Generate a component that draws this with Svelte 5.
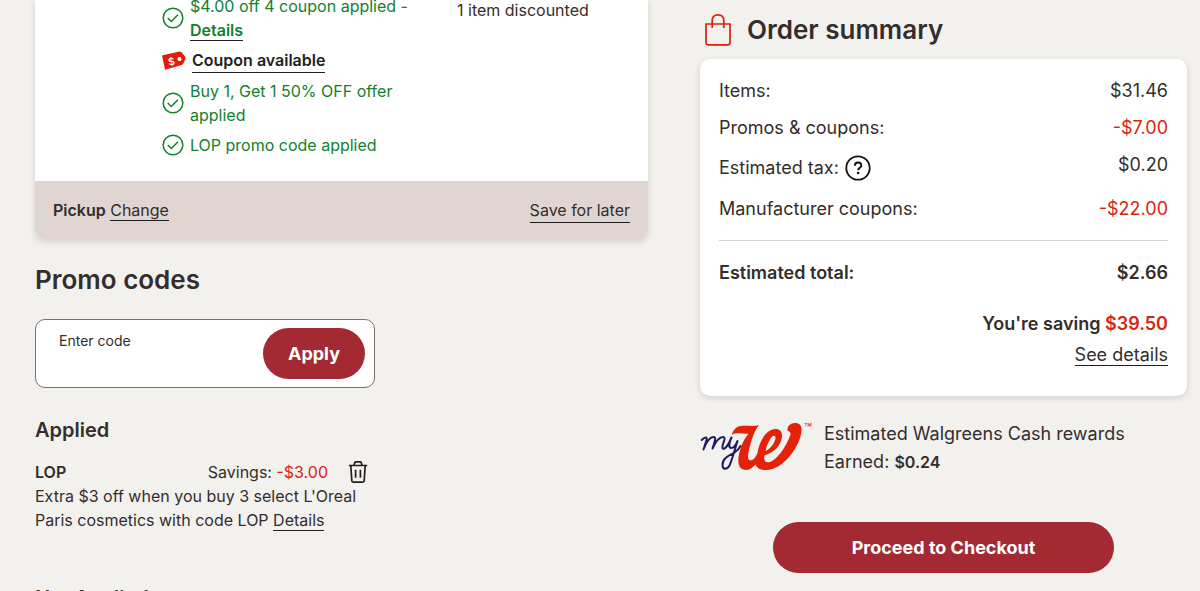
<script>
  let code = $state('');

  const offers = [
    { text: '$4.00 off 4 coupon applied -', link: 'Details' },
    { coupon: 'Coupon available' },
    { text: 'Buy 1, Get 1 50% OFF offer applied' },
    { text: 'LOP promo code applied' },
  ];

  const lines = [
    { label: 'Items:', amount: '$31.46' },
    { label: 'Promos & coupons:', amount: '-$7.00', saving: true },
    { label: 'Estimated tax:', amount: '$0.20', help: true },
    { label: 'Manufacturer coupons:', amount: '-$22.00', saving: true },
  ];
</script>

<main>
  <div class="cart">
    <section class="item">
      <div class="item-body">
        <ul class="offers">
          {#each offers as offer}
            {#if offer.coupon}
              <li class="coupon">
                <svg width="24" height="20" viewBox="0 0 24 20" aria-hidden="true">
                  <path d="M.6 4.2 17.6.4q1 0 1.7.7l3.8 4.5q.7 1 .3 2.2l-2.2 5q-.5 1-1.5 1.3L4 18.6q-1 .2-1.2-.8L.2 5.2q0-.8.4-1Z" fill="#df1f0c" />
                  <circle cx="17.5" cy="8" r="2" fill="#fff" />
                  <text x="6" y="14" transform="rotate(-12 10 10)" font-size="10" font-weight="600" fill="#fff">$</text>
                </svg>
                <a class="strong" href="#coupon">{offer.coupon}</a>
              </li>
            {:else}
              <li>
                <svg width="22" height="22" viewBox="0 0 22 22" fill="none" stroke="#12802f" stroke-width="1.5" aria-hidden="true">
                  <circle cx="11" cy="11" r="9.8" />
                  <path d="m5.8 11 3.5 3.5L16 7.8" />
                </svg>
                <span>
                  {offer.text}
                  {#if offer.link}<a class="strong" href="#offer">{offer.link}</a>{/if}
                </span>
              </li>
            {/if}
          {/each}
        </ul>
        <p class="discounted">1 item discounted</p>
      </div>
      <footer class="item-footer">
        <span><b>Pickup</b> <a href="#pickup">Change</a></span>
        <a href="#save">Save for later</a>
      </footer>
    </section>

    <section class="promo">
      <h2>Promo codes</h2>
      <form class="code-box" onsubmit={(e) => e.preventDefault()}>
        <div class="field">
          <label for="code">Enter code</label>
          <input id="code" type="text" bind:value={code} />
        </div>
        <button class="primary apply">Apply</button>
      </form>

      <h3>Applied</h3>
      <div class="applied">
        <div class="applied-head">
          <b>LOP</b>
          <span class="savings">Savings: <span class="red">-$3.00</span></span>
          <button class="icon" aria-label="Remove LOP">
            <svg width="20" height="22" viewBox="0 0 20 22" fill="none" stroke="#231f20" stroke-width="1.7" stroke-linejoin="round" aria-hidden="true">
              <path d="M.8 4.5h18.4M6 4.3l.8-2.8q.2-.6.8-.6h4.8q.6 0 .8.6l.8 2.8M2.8 4.8l1 15q.1 1.3 1.4 1.3h9.6q1.3 0 1.4-1.3l1-15M7.6 8.8v8M12.4 8.8v8" />
            </svg>
          </button>
        </div>
        <p>Extra $3 off when you buy 3 select L'Oreal Paris cosmetics with code LOP <a href="#lop">Details</a></p>
      </div>

      <h3>Not Applied</h3>
    </section>
  </div>

  <aside>
    <h2 class="summary-title">
      <svg width="26" height="32" viewBox="0 0 26 32" fill="none" stroke="#df1f0c" stroke-width="1.7" aria-hidden="true">
        <path d="M1 10h24v18.5q0 2.3-2.3 2.3H3.3Q1 30.8 1 28.5Z" />
        <path d="M7.2 14V6.8q0-5.9 5.8-5.9t5.8 5.9V14" />
      </svg>
      Order summary
    </h2>
    <div class="summary">
      <dl>
        {#each lines as line}
          <div class="line" class:tax={line.help}>
            <dt>
              {line.label}
              {#if line.help}
                <button class="icon" aria-label="About estimated tax">
                  <svg width="26" height="26" viewBox="0 0 26 26" fill="none" stroke="#111" aria-hidden="true">
                    <circle cx="13" cy="13" r="11.7" stroke-width="1.8" />
                    <path d="M9.9 10.7q0-3.2 3.2-3.2t3.2 2.9q0 1.5-1.6 2.5-1.5.9-1.5 2.3" stroke-width="1.9" />
                    <circle cx="13.1" cy="18" r="1.3" fill="#111" stroke="none" />
                  </svg>
                </button>
              {/if}
            </dt>
            <dd class:red={line.saving}>{line.amount}</dd>
          </div>
        {/each}
        <div class="line total">
          <dt>Estimated total:</dt>
          <dd>$2.66</dd>
        </div>
      </dl>
      <p class="saving">You're saving <span class="red">$39.50</span></p>
      <p class="see"><a href="#details">See details</a></p>
    </div>

    <div class="rewards">
      <svg width="112" height="50" viewBox="0 0 112 50" fill="none" role="img" aria-label="myW">
        <path d="M1.7 19C5 15.500 7.500 15.500 6.500 19L3.500 28.500C6 22 10 16 13.500 16 16.500 16 15 20 12.500 27.500 15.500 21 19.500 16 23 16 26 16 24 20 23 23 22 26 22 28.500 24.500 27.500 27 26.500 30 20 31.500 16.500 29 22 28 27 31.500 27 35 27 36 23 37.500 20 34 31 32 39 29.500 44.500 27 49 22.500 49 22.500 44 22.500 37 29 34.500 34 32 37 30 39 28 40.500 25" stroke="#1d1b60" stroke-width="2" stroke-linecap="round" stroke-linejoin="round" />
        <path fill-rule="evenodd" d="M31.700 13.700C34 7.500 37 4.700 43 4.700 49 4.700 54 5.500 59 4.200 54 10 51 20 49 29 47.500 36 47.500 39.500 51 39.300 54 39 56 35.500 57.500 32 59 21 66 8 75.500 8 80 8 82.500 11 82 16 81 25 73 32 64.500 34.500 63.500 39 65 41.800 68.500 41.300 77 40 86.500 25 90.500 13.500 91 11.500 89.500 10.500 87.500 9.500 87 5.500 90 2 95 2 100 2 102 5 101.500 10 100.500 24 84 49 66 49 60.500 49 57 47.500 55.500 43.500 52 47.500 49 49 46 49 40 49 37.500 44 38.500 36 40 27 43.500 18.500 48.500 12.800 42 12.800 36 11 31.700 13.700ZM65.500 30C71 27.500 75 21.500 75.500 17 75.500 14 73 14 71 17 68.500 20.500 66.500 25 65.500 30Z" fill="#e32209" />
        <text x="104" y="12" font-size="13" fill="#e32209">™</text>
      </svg>
      <p>Estimated Walgreens Cash rewards<br />Earned: <b>$0.24</b></p>
    </div>

    <button class="primary checkout">Proceed to Checkout</button>
  </aside>
</main>

<style>
  :global(body) {
    background: #f3f1ee;
  }

  main {
    display: grid;
    grid-template-columns: 613fr 487fr;
    gap: 52px;
    height: 100vh;
    padding: 0 13px 0 35px;
    box-sizing: border-box;
    overflow: hidden;
    font-family: Inter, 'Liberation Sans', sans-serif;
    font-size: 16px;
    font-weight: 400;
    line-height: 24px;
    color: #332d2c;
  }

  h2,
  h3,
  p,
  ul,
  dl,
  dd {
    margin: 0;
    padding: 0;
  }

  h2 {
    font-size: 26px;
    font-weight: 600;
    line-height: 32px;
  }

  h3 {
    font-size: 20px;
    font-weight: 600;
    line-height: 28px;
  }

  b,
  .strong {
    font-weight: 600;
  }

  a {
    color: inherit;
    text-decoration: none;
    border-bottom: 1px solid #231f20;
  }

  button,
  input {
    padding: 0;
    border: 0;
    background: none;
    font: inherit;
    color: inherit;
  }

  button {
    cursor: pointer;
  }

  svg {
    display: block;
    flex: none;
    overflow: visible;
  }

  .red {
    color: #d92410;
  }

  .item {
    background: #fff;
    border-radius: 0 0 10px 10px;
    box-shadow: 0 2px 6px rgba(60, 30, 20, 0.16);
    overflow: hidden;
  }

  /* the card starts above the visible part of the page */
  .item-body {
    display: grid;
    grid-template-columns: 263px 1fr;
    gap: 32px;
    margin-top: -6px;
    padding: 0 18px 24px 127px;
  }

  .offers {
    display: flex;
    flex-direction: column;
    gap: 6px;
    list-style: none;
    color: #12802f;
  }

  .offers li {
    display: flex;
    align-items: center;
    gap: 6px;
  }

  .offers .coupon {
    color: #231f20;
  }

  .discounted {
    padding-top: 4px;
  }

  .item-footer {
    display: flex;
    justify-content: space-between;
    padding: 17px 18px;
    background: #dfd5d1;
  }

  .promo h2 {
    margin: 24px 0 23px;
  }

  .code-box {
    display: flex;
    align-items: center;
    justify-content: space-between;
    max-width: 340px;
    box-sizing: border-box;
    padding: 8px 9px 8px 23px;
    margin-bottom: 28px;
    border: 1px solid #77706e;
    border-radius: 10px;
    background: #fff;
  }

  .field {
    display: flex;
    flex: 1;
    flex-direction: column;
    min-width: 0;
    font-size: 14px;
  }

  .field input {
    height: 26px;
    outline: none;
  }

  .primary {
    border-radius: 26px;
    background: #a32a32;
    color: #fff;
    font-size: 18px;
    font-weight: 700;
    line-height: 51px;
  }

  .apply {
    padding: 0 25px;
  }

  .applied {
    max-width: 350px;
    margin: 16px 0 52px;
  }

  .applied-head {
    display: flex;
    align-items: center;
  }

  .savings {
    margin-left: auto;
  }

  .applied .icon {
    margin: 0 17px 0 20px;
  }

  .summary-title {
    display: flex;
    align-items: center;
    gap: 16px;
    padding: 14px 5px 13px;
  }

  .summary {
    padding: 18px 19px 27px;
    border-radius: 10px;
    background: #fff;
    box-shadow: 0 2px 6px rgba(60, 30, 20, 0.16);
    font-size: 18px;
    line-height: 28px;
  }

  .line {
    display: flex;
    justify-content: space-between;
    margin-bottom: 9px;
  }

  .line dt {
    display: flex;
    align-items: center;
    gap: 6px;
  }

  .line.tax {
    margin-bottom: 13px;
  }

  .tax dt {
    padding-top: 3px;
  }

  .line.total {
    padding-top: 18px;
    margin: 17px 0 23px;
    border-top: 1px solid #d8d4d2;
    font-weight: 600;
  }

  .saving {
    text-align: right;
    font-weight: 600;
  }

  .see {
    margin-top: 3px;
    text-align: right;
  }

  .rewards {
    display: flex;
    gap: 12px;
    margin: 24px 0 46px;
    font-size: 18px;
    line-height: 28px;
  }

  .rewards svg {
    margin-top: 1px;
  }

  .rewards b {
    font-size: 16px;
  }

  .checkout {
    display: block;
    width: 70%;
    margin: 0 auto;
  }
</style>
